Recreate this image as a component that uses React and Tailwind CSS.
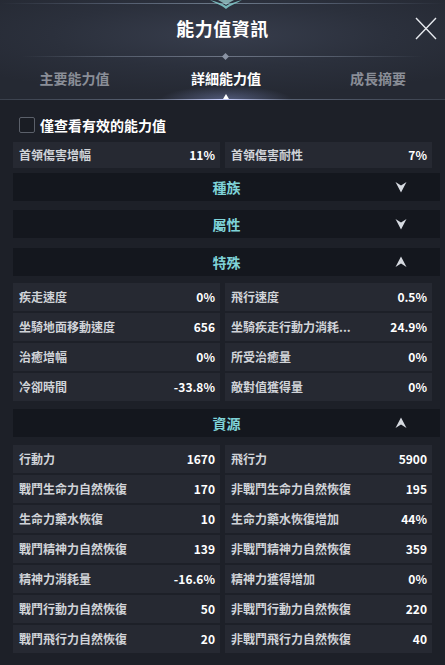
import React from "react";

const special = [
  ["疾走速度", "0%", "飛行速度", "0.5%"],
  ["坐騎地面移動速度", "656", "坐騎疾走行動力消耗...", "24.9%"],
  ["治癒增幅", "0%", "所受治癒量", "0%"],
  ["冷卻時間", "-33.8%", "敵對值獲得量", "0%"],
];

const resources = [
  ["行動力", "1670", "飛行力", "5900"],
  ["戰鬥生命力自然恢復", "170", "非戰鬥生命力自然恢復", "195"],
  ["生命力藥水恢復", "10", "生命力藥水恢復增加", "44%"],
  ["戰鬥精神力自然恢復", "139", "非戰鬥精神力自然恢復", "359"],
  ["精神力消耗量", "-16.6%", "精神力獲得增加", "0%"],
  ["戰鬥行動力自然恢復", "50", "非戰鬥行動力自然恢復", "220"],
  ["戰鬥飛行力自然恢復", "20", "非戰鬥飛行力自然恢復", "40"],
];

function Chevron({ up }) {
  return (
    <svg width="12" height="12" viewBox="0 0 12 12" className={up ? "rotate-180" : ""}>
      <path d="M0.5 1 L6 4.5 L11.5 1 L6 11.5 Z" fill="#d6dae0" />
    </svg>
  );
}

function SectionHeader({ title, up, className = "" }) {
  return (
    <div className={"w-[427px] h-[28px] bg-[#14171e] grid grid-cols-[1fr_auto_1fr] items-center " + className}>
      <div />
      <div className="text-[14px] font-bold text-[#7fd3d8] leading-none">{title}</div>
      <div className="flex justify-end pr-[33px]">
        <Chevron up={up} />
      </div>
    </div>
  );
}

function Cell({ label, value, h = "h-[28px]" }) {
  return (
    <div className={"w-[210px] bg-[#262932] flex items-center justify-between pl-[6px] pr-[5px] " + h}>
      <span className="text-[12px] font-bold text-[#d0d3d8] whitespace-nowrap leading-none">{label}</span>
      <span className="text-[12px] font-bold text-white whitespace-nowrap leading-none">{value}</span>
    </div>
  );
}

function Row({ r, h }) {
  return (
    <div className="flex gap-[5px]">
      <Cell label={r[0]} value={r[1]} h={h} />
      <Cell label={r[2]} value={r[3]} h={h} />
    </div>
  );
}

export default function App() {
  return (
    <div
      className="w-[445px] h-[665px] overflow-hidden bg-[#1d2028] text-white"
      style={{ fontFamily: '"Noto Sans CJK TC", "Noto Sans", sans-serif' }}
    >
      {/* Header */}
      <div className="relative h-[100px] bg-[radial-gradient(ellipse_70%_60%_at_50%_35%,#373d4c_0%,#2b303c_55%,#252933_100%)]">
        <div className="absolute left-0 right-0 top-[3px] h-px bg-[linear-gradient(90deg,transparent,#566072_30%,#6d7a8a_50%,#566072_70%,transparent)]" />
        <svg className="absolute left-[206px] top-0" width="40" height="10" viewBox="0 0 40 10">
          <path d="M4 0 C10 4 16 5 20 9 C24 5 30 4 36 0 C30 2 24 3 20 6 C16 3 10 2 4 0 Z" fill="#7fc4c6" opacity="0.9" />
          <path d="M12 0 C15 2 18 3 20 5 C22 3 25 2 28 0 Z" fill="#a8e0df" opacity="0.7" />
        </svg>

        <div className="h-[56px] flex items-center justify-center">
          <span className="text-[18px] font-bold tracking-[0.5px] text-white">能力值資訊</span>
        </div>

        <svg className="absolute left-[414px] top-[17px]" width="24" height="23" viewBox="0 0 24 23">
          <path d="M2 1 L22 22 M22 1 L2 22" stroke="#e6e9ee" strokeWidth="1.4" />
        </svg>

        <div className="relative h-px bg-[linear-gradient(90deg,transparent_5%,#535b6a_25%,#6c7484_50%,#535b6a_75%,transparent_95%)]">
          <div className="absolute left-[223px] top-[-2px] w-[5px] h-[5px] rotate-45 bg-[#8a93a3]" />
        </div>

        <div className="flex h-[43px] items-center">
          <div className="w-[149px] shrink-0 text-center text-[14px] font-bold text-[#8a8e97]">主要能力值</div>
          <div className="w-[154px] shrink-0 text-center text-[14px] font-bold text-white">詳細能力值</div>
          <div className="w-[150px] shrink-0 text-center text-[14px] font-bold text-[#8a8e97]">成長摘要</div>
        </div>

        <div className="absolute left-[160px] top-[86px] w-[132px] h-[14px] bg-[radial-gradient(ellipse_50%_100%_at_50%_100%,rgba(150,165,230,0.4)_0%,transparent_100%)]" />
        <div className="absolute left-0 right-0 top-[99px] h-px bg-[linear-gradient(90deg,#3a404c,#596273_35%,#c8d0ff_50%,#596273_65%,#3a404c)]" />
        <div className="absolute left-[223px] top-[94px] w-0 h-0 border-l-[3px] border-r-[3px] border-b-[5px] border-l-transparent border-r-transparent border-b-white" />
      </div>

      {/* Content */}
      <div className="px-[13px]">
        <div className="h-[42px] pt-[17px] flex items-start gap-[5px] pl-[6px]">
          <div className="w-[16px] h-[16px] rounded-[2px] border-[1.5px] border-[#5b606a] bg-[#1a1d24]" />
          <span className="text-[14px] font-bold text-white leading-[16px]">僅查看有效的能力值</span>
        </div>

        <Row r={["首領傷害增幅", "11%", "首領傷害耐性", "7%"]} h="h-[26px]" />

        <SectionHeader title="種族" className="mt-[5px]" />
        <SectionHeader title="屬性" className="mt-[9px]" />
        <SectionHeader title="特殊" up className="mt-[10px]" />

        <div className="mt-[7px] flex flex-col gap-[2px]">
          {special.map((r, i) => (
            <Row key={i} r={r} />
          ))}
        </div>

        <SectionHeader title="資源" up className="mt-[8px]" />

        <div className="mt-[8px] flex flex-col gap-[2px]">
          {resources.map((r, i) => (
            <Row key={i} r={r} />
          ))}
        </div>
      </div>
    </div>
  );
}
